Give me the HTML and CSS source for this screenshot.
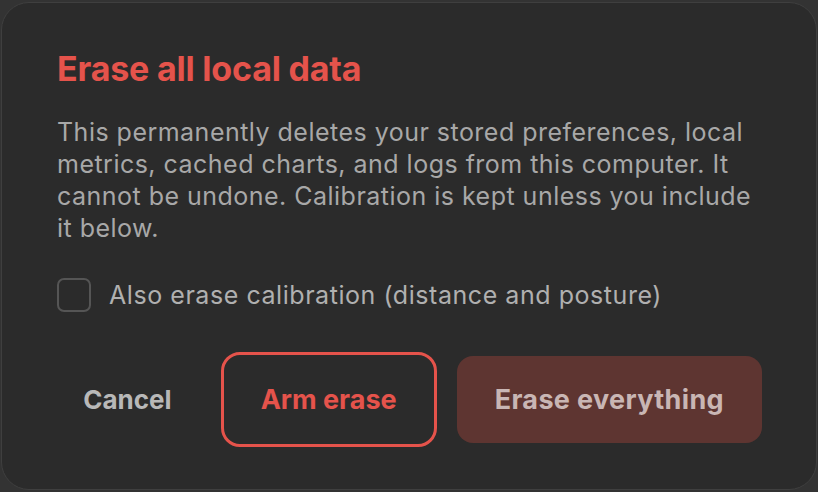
FILE: index.html
```html
<!DOCTYPE html>
<html lang="en">
<head>
<meta charset="utf-8">
<link rel="stylesheet" href="styles.css">
</head>
<body>
<div class="dialog">
  <h1 class="title">Erase all local data</h1>
  <p class="desc">This permanently deletes your stored preferences, local metrics, cached charts, and logs from this computer. It cannot be undone. Calibration is kept unless you include it below.</p>
  <label class="check">
    <span class="box"></span>
    <span class="check-label">Also erase calibration (distance and posture)</span>
  </label>
  <div class="actions">
    <button class="btn btn-cancel">Cancel</button>
    <button class="btn btn-arm">Arm erase</button>
    <button class="btn btn-erase">Erase everything</button>
  </div>
</div>
</body>
</html>
```
FILE: styles.css
```css
html, body {
  margin: 0;
  padding: 0;
  height: 100%;
}
body {
  background: #333333;
  font-family: Inter, "Noto Sans", sans-serif;
  box-sizing: border-box;
  padding: 2px 1px;
}
.dialog {
  box-sizing: border-box;
  height: 488px;
  background: #2b2b2b;
  border: 1px solid #3f3f3f;
  border-radius: 28px;
  padding: 46px 54px 0 55px;
}
.title {
  margin: 0;
  font-size: 34px;
  line-height: 40px;
  font-weight: 700;
  color: #e5534b;
  letter-spacing: -0.2px;
}
.desc {
  margin: 27px 0 0;
  font-size: 25px;
  line-height: 32px;
  color: #a8a8a8;
  letter-spacing: 0.48px;
}
.check {
  display: flex;
  align-items: center;
  gap: 18px;
  margin-top: 34px;
}
.box {
  box-sizing: border-box;
  flex: none;
  width: 34px;
  height: 34px;
  border: 2px solid #555555;
  border-radius: 7px;
}
.check-label {
  font-size: 25px;
  color: #b0b0b0;
  letter-spacing: 0.55px;
  white-space: nowrap;
}
.actions {
  display: flex;
  align-items: center;
  justify-content: flex-end;
  gap: 20px;
  margin-top: 40px;
}
.btn {
  flex: none;
  white-space: nowrap;
  font-family: Inter, "Noto Sans", sans-serif;
  font-size: 27px;
  font-weight: 700;
  border: none;
  background: transparent;
  height: 87px;
  padding: 0 38px;
  border-radius: 16px;
}
.btn-cancel {
  color: #b8b8b8;
  font-size: 26px;
  padding: 0 29px;
}
.btn-arm {
  color: #e5534b;
  height: 95px;
  border: 3px solid #e5534b;
  border-radius: 19px;
  padding: 0 37px;
}
.btn-erase {
  background: #5e3531;
  color: #c9b6b4;
  letter-spacing: 0.35px;
}
```
